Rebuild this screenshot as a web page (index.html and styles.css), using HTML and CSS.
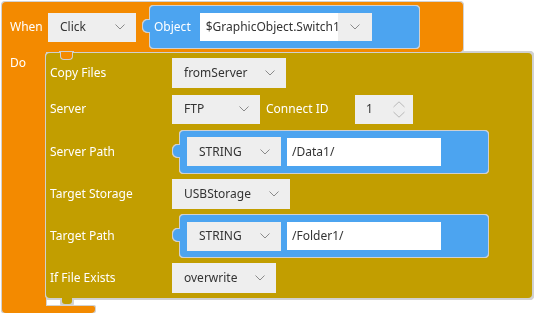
FILE: index.html
```html
<!DOCTYPE html>
<html>
<head>
<meta charset="utf-8">
<link rel="stylesheet" href="styles.css">
</head>
<body>
<div class="canvas">
  <div class="event">
    <div class="ev-head">
      <span class="lbl when">When</span>
      <div class="dd dd-click"><span>Click</span><svg class="chev" width="10" height="6" viewBox="0 0 10 6"><polyline points="0.5,0.5 5,5 9.5,0.5"/></svg></div>
      <div class="vblock obj">
        <span class="lbl">Object</span>
        <div class="combo">
          <span class="combo-text">$GraphicObject.Switch1</span>
          <span class="combo-btn"><svg class="chev" width="10" height="6" viewBox="0 0 10 6"><polyline points="0.5,0.5 5,5 9.5,0.5"/></svg></span>
        </div>
      </div>
    </div>
    <div class="ev-mid">
      <div class="ev-col"><span class="lbl do">Do</span></div>
      <div class="gold">
        <span class="notch-top"></span>
        <span class="notch-bottom"></span>
        <div class="rows">
          <span class="lbl">Copy Files</span>
          <div class="cell"><div class="dd"><span>fromServer</span><svg class="chev" width="10" height="6" viewBox="0 0 10 6"><polyline points="0.5,0.5 5,5 9.5,0.5"/></svg></div></div>

          <span class="lbl">Server</span>
          <div class="cell">
            <div class="dd dd-short"><span>FTP</span><svg class="chev" width="10" height="6" viewBox="0 0 10 6"><polyline points="0.5,0.5 5,5 9.5,0.5"/></svg></div>
            <span class="lbl connect">Connect ID</span>
            <div class="num"><span>1</span>
              <span class="spin">
                <svg width="12" height="7" viewBox="0 0 12 7"><polyline points="0.5,6 6,0.8 11.5,6"/></svg>
                <svg width="12" height="7" viewBox="0 0 12 7"><polyline points="0.5,1 6,6.2 11.5,1"/></svg>
              </span>
            </div>
          </div>

          <span class="lbl">Server Path</span>
          <div class="cell">
            <div class="vblock path">
              <div class="dd dd-str"><span>STRING</span><svg class="chev" width="10" height="6" viewBox="0 0 10 6"><polyline points="0.5,0.5 5,5 9.5,0.5"/></svg></div>
              <div class="txt">/Data1/</div>
            </div>
          </div>

          <span class="lbl">Target Storage</span>
          <div class="cell"><div class="dd"><span>USBStorage</span><svg class="chev" width="10" height="6" viewBox="0 0 10 6"><polyline points="0.5,0.5 5,5 9.5,0.5"/></svg></div></div>

          <span class="lbl">Target Path</span>
          <div class="cell">
            <div class="vblock path">
              <div class="dd dd-str"><span>STRING</span><svg class="chev" width="10" height="6" viewBox="0 0 10 6"><polyline points="0.5,0.5 5,5 9.5,0.5"/></svg></div>
              <div class="txt">/Folder1/</div>
            </div>
          </div>

          <span class="lbl">If File Exists</span>
          <div class="cell"><div class="dd"><span>overwrite</span><svg class="chev" width="10" height="6" viewBox="0 0 10 6"><polyline points="0.5,0.5 5,5 9.5,0.5"/></svg></div></div>
        </div>
      </div>
    </div>
    <div class="ev-foot"></div>
  </div>
</div>
</body>
</html>
```
FILE: styles.css
```css
* { box-sizing: border-box; }
html, body { margin: 0; background: #ffffff; }
body {
  font-family: "Noto Sans", "Open Sans", sans-serif;
  font-size: 12px;
  line-height: 16px;
  color: #333333;
}
.canvas { padding: 2px 0 0 2px; }

.event {
  display: flex;
  flex-direction: column;
  align-items: flex-start;
  filter: drop-shadow(1px 0 0 #d2d2d2) drop-shadow(-1px 0 0 #d2d2d2) drop-shadow(0 1px 0 #d2d2d2) drop-shadow(0 -1px 0 #d2d2d2);
}
.ev-head {
  width: 461px;
  height: 50px;
  background: #f38a00;
  border-radius: 4px 4px 4px 0;
  display: flex;
  align-items: center;
  padding-left: 8px;
}
.lbl { color: #ffffff; white-space: nowrap; }
.when { width: 38px; }

.ev-mid { display: flex; align-items: stretch; }
.ev-col {
  width: 44px;
  background: #f38a00;
  padding: 3px 0 0 8px;
}
.ev-foot {
  width: 93px;
  height: 7px;
  background: #f38a00;
  border-radius: 0 2px 4px 4px;
}

.dd {
  display: inline-flex;
  align-items: center;
  justify-content: space-between;
  gap: 18px;
  height: 30px;
  min-width: 88px;
  padding: 0 11px 0 12px;
  background: #eeeeee;
  color: #333333;
}
.dd-click { height: 29px; }
.dd-short { height: 29px; }
.dd-str { height: 29px; width: 94px; }
.chev { display: block; flex: none; }
.chev polyline, .spin polyline { fill: none; stroke: #8a8a8a; stroke-width: 1; }
.spin polyline { stroke: #b8b8b8; }

.vblock {
  position: relative;
  display: flex;
  align-items: center;
  height: 42px;
  background: #4ca4f0;
  border-radius: 4px;
  filter: drop-shadow(1px 0 0 #d0d0d0) drop-shadow(-1px 0 0 #d0d0d0) drop-shadow(0 1px 0 #d0d0d0) drop-shadow(0 -1px 0 #d0d0d0);
}
.vblock::before {
  content: "";
  position: absolute;
  left: -7px;
  top: 14px;
  width: 8px;
  height: 12px;
  background: #4ca4f0;
  border-radius: 5px 0 0 5px;
}
.obj {
  margin-left: 14px;
  padding: 0 47px 0 4px;
  gap: 9px;
}
.combo { display: flex; height: 28px; }
.combo-text {
  width: 138px;
  background: #ffffff;
  padding-left: 6px;
  display: flex;
  align-items: center;
  color: #333333;
}
.combo-btn {
  width: 34px;
  background: #eeeeee;
  display: flex;
  align-items: center;
  justify-content: center;
}

.gold {
  position: relative;
  width: 486px;
  margin: 1px 0 8px 0;
  background: #c29e00;
  border-radius: 4px;
  filter: drop-shadow(1px 0 0 #d0d0d0) drop-shadow(-1px 0 0 #d0d0d0) drop-shadow(0 1px 0 #d0d0d0) drop-shadow(0 -1px 0 #d0d0d0);
}
.notch-top {
  position: absolute;
  left: 14px;
  top: -1px;
  width: 13px;
  height: 8px;
  background: #f38a00;
  border: 1px solid #d0d0d0;
  border-top: none;
  border-radius: 0 0 4px 4px;
}
.notch-bottom {
  position: absolute;
  left: 16px;
  bottom: -6px;
  width: 10px;
  height: 7px;
  background: #c29e00;
  border-radius: 0 0 3px 3px;
}
.rows {
  display: grid;
  grid-template-columns: 122px auto;
  grid-template-rows: 30px 30px 43px 30px 42px 30px;
  row-gap: 6px;
  align-items: center;
  padding: 5px 0 5px 4px;
}
.cell { display: flex; align-items: center; }
.connect { width: 95px; padding-left: 6px; }
.num {
  width: 58px;
  height: 29px;
  background: #eeeeee;
  display: flex;
  align-items: center;
  justify-content: space-between;
  padding: 0 8px 0 11px;
}
.spin { display: flex; flex-direction: column; gap: 3px; }
.spin svg { display: block; }
.path {
  margin-left: 8px;
  width: 308px;
  padding: 0 0 0 7px;
  gap: 6px;
}
.txt {
  width: 154px;
  height: 28px;
  background: #ffffff;
  padding-left: 5px;
  display: flex;
  align-items: center;
  color: #333333;
}
```
